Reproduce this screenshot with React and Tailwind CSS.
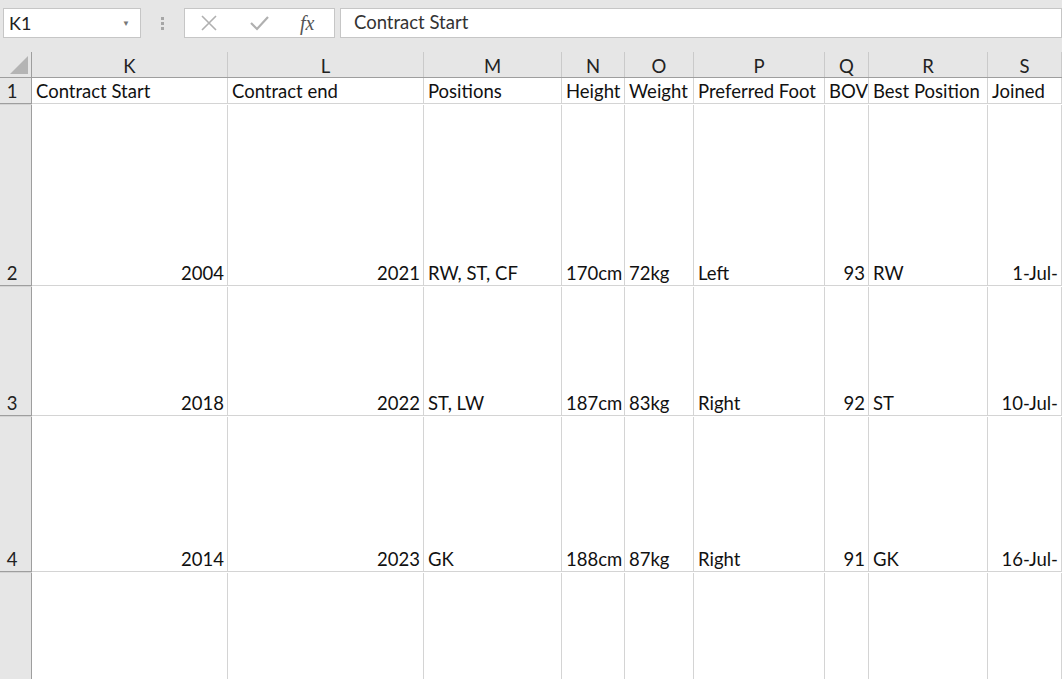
import React from 'react'

const cols = ['K', 'L', 'M', 'N', 'O', 'P', 'Q', 'R', 'S']
const header = ['Contract Start', 'Contract end', 'Positions', 'Height', 'Weight', 'Preferred Foot', 'BOV', 'Best Position', 'Joined']

// [value, right aligned?]
const rows = [
    { n: 2, h: 'h-[182px]', cells: [['2004', 1], ['2021', 1], ['RW, ST, CF'], ['170cm'], ['72kg'], ['Left'], ['93', 1], ['RW'], ['1-Jul-', 1]] },
    { n: 3, h: 'h-[130px]', cells: [['2018', 1], ['2022', 1], ['ST, LW'], ['187cm'], ['83kg'], ['Right'], ['92', 1], ['ST'], ['10-Jul-', 1]] },
    { n: 4, h: 'h-[156px]', cells: [['2014', 1], ['2023', 1], ['GK'], ['188cm'], ['87kg'], ['Right'], ['91', 1], ['GK'], ['16-Jul-', 1]] },
    { n: '', h: 'h-[120px]', cells: [[''], [''], [''], [''], [''], [''], [''], [''], ['']] },
]

const grid = 'grid grid-rows-1 grid-cols-[32px_196px_196px_138px_63px_69px_131px_44px_119px_1fr]'

function FormulaBar() {
    return (
        <div className="h-[52px] flex items-start pt-[8px] bg-[#e6e6e6]">
            <div className="ml-[3px] w-[138px] h-[30px] bg-white border border-[#c6c6c6] flex items-center justify-between pl-[5px] pr-[10px] text-[18px] text-[#222]">
                <span>K1</span>
                <span className="text-[8px] text-[#777]">▼</span>
            </div>
            <div className="w-[43px] h-[30px] flex items-center justify-center">
                <div className="flex flex-col gap-[2px]">
                    <span className="w-[3px] h-[3px] bg-[#a6a6a6]" />
                    <span className="w-[3px] h-[3px] bg-[#a6a6a6]" />
                    <span className="w-[3px] h-[3px] bg-[#a6a6a6]" />
                </div>
            </div>
            <div className="w-[151px] h-[30px] bg-white border border-[#c6c6c6] flex items-center">
                <svg width="20" height="20" viewBox="0 0 20 20" className="ml-[14px]">
                    <path d="M3 3 L17 17 M17 3 L3 17" stroke="#b0b0b0" strokeWidth="1.6" />
                </svg>
                <svg width="22" height="20" viewBox="0 0 22 20" className="ml-[29px]">
                    <path d="M3 10 L9 16 L20 4" stroke="#b0b0b0" strokeWidth="2.2" fill="none" />
                </svg>
                <span className="ml-[30px] italic text-[20px] text-[#555]" style={{ fontFamily: '"Liberation Serif", serif' }}>fx</span>
            </div>
            <div className="ml-[5px] flex-1 h-[30px] bg-white border border-[#c6c6c6] flex items-center pl-[13px] text-[18.5px] text-[#333]">
                Contract Start
            </div>
        </div>
    )
}

export default function App() {
    return (
        <div className="w-[1062px] h-[679px] overflow-hidden bg-white" style={{ fontFamily: 'Lato, "Open Sans", sans-serif' }}>
            <FormulaBar />
            <div className={grid + ' h-[26px] bg-[#e6e6e6] border-b border-[#9e9e9e] text-[18.5px] text-[#222]'}>
                <div className="border-r border-[#9e9e9e] relative">
                    <svg width="18" height="18" viewBox="0 0 18 18" className="absolute right-[3px] bottom-[3px]">
                        <path d="M18 0 L18 18 L0 18 Z" fill="#b4b4b4" />
                    </svg>
                </div>
                {cols.map(c => (
                    <div key={c} className="border-r border-[#cacaca] flex items-end justify-center leading-none pb-[2px]">{c}</div>
                ))}
                <div />
            </div>
            <div className={grid + ' h-[27px] text-[18.5px] text-[#111]'}>
                <div className="bg-[#e6e6e6] border-r border-b border-[#9e9e9e] flex items-end justify-center leading-none pb-[3px] text-[#222] pr-[7px]">1</div>
                {header.map(h => (
                    <div key={h} className="border-r border-b border-[#d4d4d4] flex items-end leading-none pb-[3px] pl-[4px] whitespace-nowrap overflow-hidden">{h}</div>
                ))}
                <div className="border-b border-[#d4d4d4]" />
            </div>
            {rows.map((r, i) => (
                <div key={i} className={grid + ' ' + r.h + ' text-[18.5px] text-[#111]'}>
                    <div className="bg-[#e6e6e6] border-r border-b border-[#9e9e9e] flex items-end justify-center leading-none pb-[3px] text-[#222] pr-[7px]">{r.n}</div>
                    {r.cells.map(([v, right], j) => (
                        <div key={j} className={'border-r border-b border-[#d4d4d4] flex items-end leading-none pb-[3px] whitespace-nowrap overflow-hidden ' + (right ? 'justify-end pr-[3px]' : 'pl-[4px]')}>{v}</div>
                    ))}
                    <div className="border-b border-[#d4d4d4]" />
                </div>
            ))}
        </div>
    )
}
